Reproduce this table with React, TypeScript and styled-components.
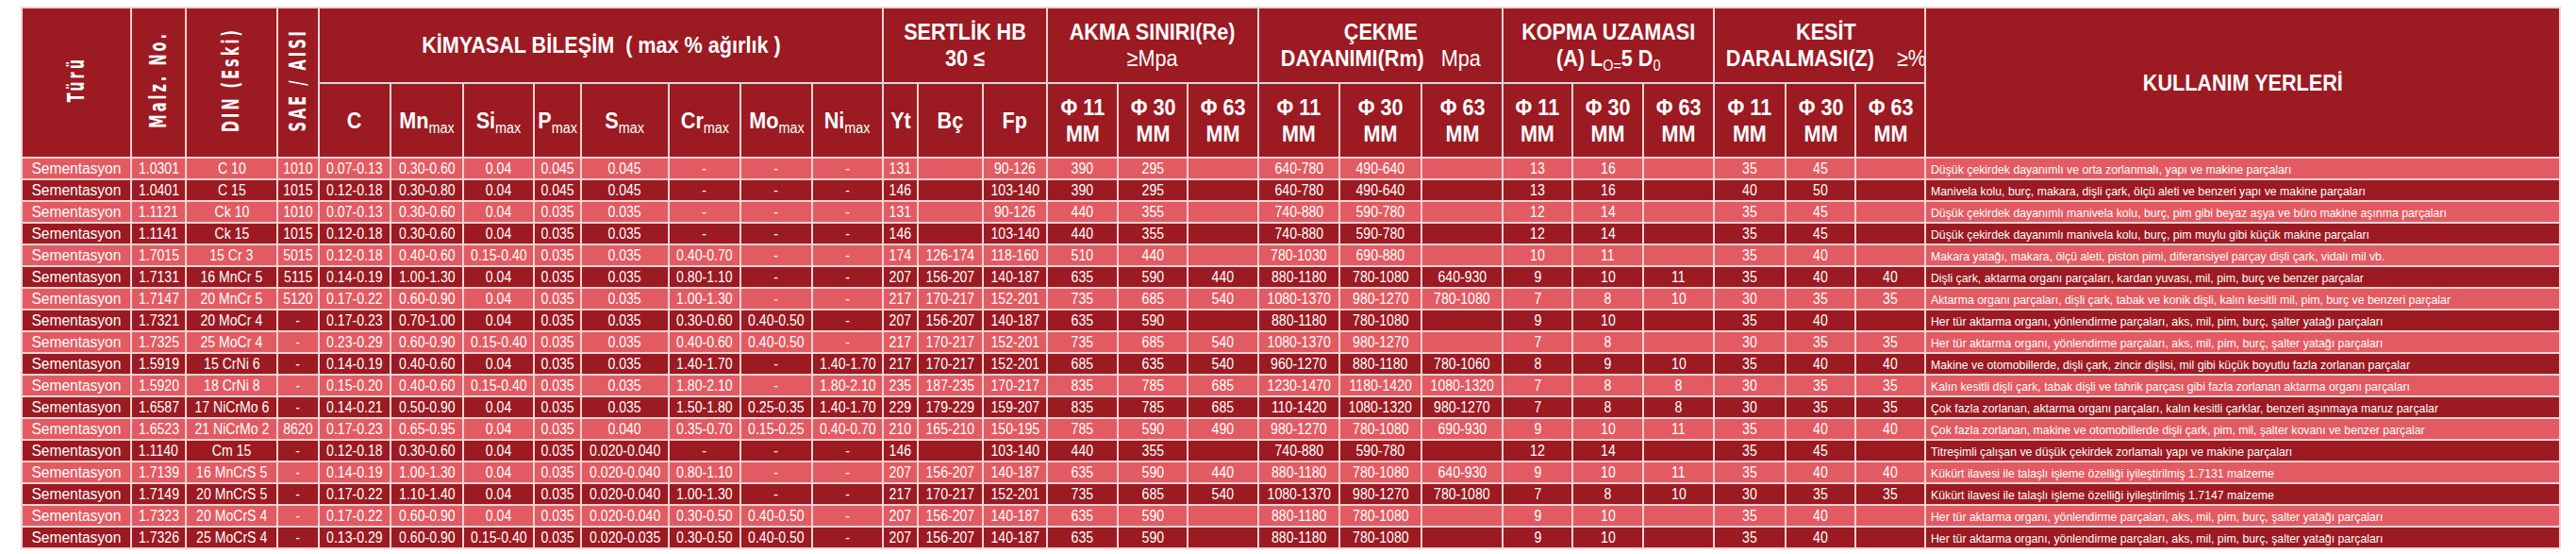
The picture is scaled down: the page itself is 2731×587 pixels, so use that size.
import styled, { createGlobalStyle } from "styled-components";
import type { ReactNode } from "react";

const GlobalStyle = createGlobalStyle`
  body {
    margin: 0;
    background: #ffffff;
    font-family: "Liberation Sans", Arial, sans-serif;
  }
`;

const Page = styled.div`
  padding: 7px 0 0 22px;
`;

const Table = styled.table`
  border-collapse: collapse;
  table-layout: fixed;
  width: 2691px;
  color: #ffffff;
`;

const HeadRow = styled.tr<{ $h: number }>`
  height: ${({ $h }) => $h}px;
`;

const HeadCell = styled.th<{ $group?: boolean }>`
  background: #9c1a22;
  color: #ffffff;
  font-size: 24px;
  font-weight: bold;
  line-height: 28px;
  padding: 0;
  text-align: center;
  vertical-align: middle;
  border: 2px solid #f1d4d5;
  border-bottom-color: ${({ $group }) => ($group ? "#d6d6d6" : "#f1d4d5")};
  white-space: nowrap;
  overflow: hidden;
`;

// narrow, tall look of the original sheet
const HeadText = styled.span`
  display: inline-block;
  transform: scaleX(0.9);
`;

const VerticalLabel = styled.span`
  display: inline-block;
  writing-mode: vertical-rl;
  transform: rotate(180deg) scaleX(1.75);
  font-family: "DejaVu Sans", Verdana, sans-serif;
  font-size: 14.5px;
  line-height: 15px;
  letter-spacing: 3px;
  font-weight: bold;
`;

const Sub = styled.sub`
  font-size: 16px;
  font-weight: normal;
  line-height: 0;
  vertical-align: -5px;
`;

const Light = styled.span`
  font-weight: normal;
`;

const Row = styled.tr<{ $dark: boolean }>`
  height: 23px;
  background: ${({ $dark }) => ($dark ? "#9c1a22" : "#e35b62")};
`;

const Cell = styled.td`
  border: 2px solid #f1d4d5;
  padding: 0;
  font-size: 16px;
  line-height: 19px;
  text-align: center;
  vertical-align: middle;
  white-space: nowrap;
  overflow: hidden;
`;

const Val = styled.span<{ $sx: number }>`
  display: inline-block;
  transform: scaleX(${({ $sx }) => $sx});
`;

const UsageCell = styled.td`
  border: 2px solid #f1d4d5;
  padding: 0 0 1px 5px;
  font-size: 13.5px;
  line-height: 16px;
  text-align: left;
  vertical-align: bottom;
  white-space: nowrap;
  overflow: hidden;
`;

const UsageText = styled.span`
  display: inline-block;
  transform: scaleX(0.91);
  transform-origin: left center;
`;

const widths = [
  116, 58, 97, 44, 76, 77, 75, 50, 93, 76, 76, 75, 37, 69, 68, 75, 74, 75, 86,
  87, 86, 74, 75, 75, 76, 74, 74, 673,
];

type Steel = {
  no: string;
  din: string;
  sae: string;
  chem: string[];
  hb: string[];
  akma: string[];
  cekme: string[];
  kopma: string[];
  kesit: string[];
  use: string;
};

const s = (
  no: string,
  din: string,
  sae: string,
  chem: string[],
  hb: string[],
  akma: string[],
  cekme: string[],
  kopma: string[],
  kesit: string[],
  use: string
): Steel => ({ no, din, sae, chem, hb, akma, cekme, kopma, kesit, use });

const HER_TUR =
  "Her tür aktarma organı, yönlendirme parçaları, aks, mil, pim, burç, şalter yatağı parçaları";

const steels: Steel[] = [
  s("1.0301", "C 10", "1010", ["0.07-0.13", "0.30-0.60", "0.04", "0.045", "0.045", "-", "-", "-"], ["131", "", "90-126"], ["390", "295", ""], ["640-780", "490-640", ""], ["13", "16", ""], ["35", "45", ""], "Düşük çekirdek dayanımlı ve orta zorlanmalı, yapı ve makine parçaları"),
  s("1.0401", "C 15", "1015", ["0.12-0.18", "0.30-0.80", "0.04", "0.045", "0.045", "-", "-", "-"], ["146", "", "103-140"], ["390", "295", ""], ["640-780", "490-640", ""], ["13", "16", ""], ["40", "50", ""], "Manivela kolu, burç, makara, dişli çark, ölçü aleti ve benzeri yapı ve makine parçaları"),
  s("1.1121", "Ck 10", "1010", ["0.07-0.13", "0.30-0.60", "0.04", "0.035", "0.035", "-", "-", "-"], ["131", "", "90-126"], ["440", "355", ""], ["740-880", "590-780", ""], ["12", "14", ""], ["35", "45", ""], "Düşük çekirdek dayanımlı manivela kolu, burç, pim gibi beyaz aşya ve büro makine aşınma parçaları"),
  s("1.1141", "Ck 15", "1015", ["0.12-0.18", "0.30-0.60", "0.04", "0.035", "0.035", "-", "-", "-"], ["146", "", "103-140"], ["440", "355", ""], ["740-880", "590-780", ""], ["12", "14", ""], ["35", "45", ""], "Düşük çekirdek dayanımlı manivela kolu, burç, pim muylu gibi küçük makine parçaları"),
  s("1.7015", "15 Cr 3", "5015", ["0.12-0.18", "0.40-0.60", "0.15-0.40", "0.035", "0.035", "0.40-0.70", "-", "-"], ["174", "126-174", "118-160"], ["510", "440", ""], ["780-1030", "690-880", ""], ["10", "11", ""], ["35", "40", ""], "Makara yatağı, makara, ölçü aleti, piston pimi, diferansiyel parçay dişli çark, vidalı mil vb."),
  s("1.7131", "16 MnCr 5", "5115", ["0.14-0.19", "1.00-1.30", "0.04", "0.035", "0.035", "0.80-1.10", "-", "-"], ["207", "156-207", "140-187"], ["635", "590", "440"], ["880-1180", "780-1080", "640-930"], ["9", "10", "11"], ["35", "40", "40"], "Dişli çark, aktarma organı parçaları, kardan yuvası, mil, pim, burç ve benzer parçalar"),
  s("1.7147", "20 MnCr 5", "5120", ["0.17-0.22", "0.60-0.90", "0.04", "0.035", "0.035", "1.00-1.30", "-", "-"], ["217", "170-217", "152-201"], ["735", "685", "540"], ["1080-1370", "980-1270", "780-1080"], ["7", "8", "10"], ["30", "35", "35"], "Aktarma organı parçaları, dişli çark, tabak ve konik dişli, kalın kesitli mil, pim, burç ve benzeri parçalar"),
  s("1.7321", "20 MoCr 4", "-", ["0.17-0.23", "0.70-1.00", "0.04", "0.035", "0.035", "0.30-0.60", "0.40-0.50", "-"], ["207", "156-207", "140-187"], ["635", "590", ""], ["880-1180", "780-1080", ""], ["9", "10", ""], ["35", "40", ""], HER_TUR),
  s("1.7325", "25 MoCr 4", "-", ["0.23-0.29", "0.60-0.90", "0.15-0.40", "0.035", "0.035", "0.40-0.60", "0.40-0.50", "-"], ["217", "170-217", "152-201"], ["735", "685", "540"], ["1080-1370", "980-1270", ""], ["7", "8", ""], ["30", "35", "35"], HER_TUR),
  s("1.5919", "15 CrNi 6", "-", ["0.14-0.19", "0.40-0.60", "0.04", "0.035", "0.035", "1.40-1.70", "-", "1.40-1.70"], ["217", "170-217", "152-201"], ["685", "635", "540"], ["960-1270", "880-1180", "780-1060"], ["8", "9", "10"], ["35", "40", "40"], "Makine ve otomobillerde, dişli çark, zincir dişlisi, mil gibi küçük boyutlu fazla zorlanan parçalar"),
  s("1.5920", "18 CrNi 8", "-", ["0.15-0.20", "0.40-0.60", "0.15-0.40", "0.035", "0.035", "1.80-2.10", "-", "1.80-2.10"], ["235", "187-235", "170-217"], ["835", "785", "685"], ["1230-1470", "1180-1420", "1080-1320"], ["7", "8", "8"], ["30", "35", "35"], "Kalın kesitli dişli çark, tabak dişli ve tahrik parçası gibi fazla zorlanan aktarma organı parçaları"),
  s("1.6587", "17 NiCrMo 6", "-", ["0.14-0.21", "0.50-0.90", "0.04", "0.035", "0.035", "1.50-1.80", "0.25-0.35", "1.40-1.70"], ["229", "179-229", "159-207"], ["835", "785", "685"], ["110-1420", "1080-1320", "980-1270"], ["7", "8", "8"], ["30", "35", "35"], "Çok fazla zorlanan, aktarma organı parçaları, kalın kesitli çarklar, benzeri aşınmaya maruz parçalar"),
  s("1.6523", "21 NiCrMo 2", "8620", ["0.17-0.23", "0.65-0.95", "0.04", "0.035", "0.040", "0.35-0.70", "0.15-0.25", "0.40-0.70"], ["210", "165-210", "150-195"], ["785", "590", "490"], ["980-1270", "780-1080", "690-930"], ["9", "10", "11"], ["35", "40", "40"], "Çok fazla zorlanan, makine ve otomobillerde dişli çark, pim, mil, şalter kovanı ve benzer parçalar"),
  s("1.1140", "Cm 15", "-", ["0.12-0.18", "0.30-0.60", "0.04", "0.035", "0.020-0.040", "-", "-", "-"], ["146", "", "103-140"], ["440", "355", ""], ["740-880", "590-780", ""], ["12", "14", ""], ["35", "45", ""], "Titreşimli çalışan ve düşük çekirdek zorlamalı yapı ve makine parçaları"),
  s("1.7139", "16 MnCrS 5", "-", ["0.14-0.19", "1.00-1.30", "0.04", "0.035", "0.020-0.040", "0.80-1.10", "-", "-"], ["207", "156-207", "140-187"], ["635", "590", "440"], ["880-1180", "780-1080", "640-930"], ["9", "10", "11"], ["35", "40", "40"], "Kükürt ilavesi ile talaşlı işleme özelliği iyileştirilmiş 1.7131 malzeme"),
  s("1.7149", "20 MnCrS 5", "-", ["0.17-0.22", "1.10-1.40", "0.04", "0.035", "0.020-0.040", "1.00-1.30", "-", "-"], ["217", "170-217", "152-201"], ["735", "685", "540"], ["1080-1370", "980-1270", "780-1080"], ["7", "8", "10"], ["30", "35", "35"], "Kükürt ilavesi ile talaşlı işleme özelliği iyileştirilmiş 1.7147 malzeme"),
  s("1.7323", "20 MoCrS 4", "-", ["0.17-0.22", "0.60-0.90", "0.04", "0.035", "0.020-0.040", "0.30-0.50", "0.40-0.50", "-"], ["207", "156-207", "140-187"], ["635", "590", ""], ["880-1180", "780-1080", ""], ["9", "10", ""], ["35", "40", ""], HER_TUR),
  s("1.7326", "25 MoCrS 4", "-", ["0.13-0.29", "0.60-0.90", "0.15-0.40", "0.035", "0.020-0.035", "0.30-0.50", "0.40-0.50", "-"], ["207", "156-207", "140-187"], ["635", "590", ""], ["880-1180", "780-1080", ""], ["9", "10", ""], ["35", "40", ""], HER_TUR),
];

const elements = ["Mn", "Si", "P", "S", "Cr", "Mo", "Ni"];
const diameters = ["11", "30", "63"];

function Head({ children, span, group }: { children: ReactNode; span?: number; group?: boolean }) {
  return (
    <HeadCell colSpan={span} $group={group}>
      <HeadText>{children}</HeadText>
    </HeadCell>
  );
}

function DiaHeads() {
  return (
    <>
      {diameters.map((d) => (
        <Head key={d}>
          Φ {d}
          <br />
          MM
        </Head>
      ))}
    </>
  );
}

function Vertical({ children }: { children: string }) {
  return (
    <HeadCell rowSpan={2}>
      <VerticalLabel>{children}</VerticalLabel>
    </HeadCell>
  );
}

export default function App() {
  return (
    <Page>
      <GlobalStyle />
      <Table>
        <colgroup>
          {widths.map((w, i) => (
            <col key={i} style={{ width: w }} />
          ))}
        </colgroup>
        <thead>
          <HeadRow $h={80}>
            <Vertical>Türü</Vertical>
            <Vertical>Malz. No.</Vertical>
            <Vertical>DIN (Eski)</Vertical>
            <Vertical>SAE / AISI</Vertical>
            <Head span={8} group>
              KİMYASAL BİLEŞİM&nbsp; ( max % ağırlık )
            </Head>
            <Head span={3} group>
              SERTLİK HB
              <br />
              30 ≤
            </Head>
            <Head span={3} group>
              AKMA SINIRI(Re)
              <br />
              <Light>≥Mpa</Light>
            </Head>
            <Head span={3} group>
              ÇEKME
              <br />
              DAYANIMI(Rm)&nbsp;&nbsp; <Light>Mpa</Light>
            </Head>
            <Head span={3} group>
              KOPMA UZAMASI
              <br />
              (A) L<Sub>O=</Sub>5 D<Sub>0</Sub>
            </Head>
            <Head span={3} group>
              KESİT
              <br />
              DARALMASI(Z)&nbsp;&nbsp;&nbsp; <Light>≥%</Light>
            </Head>
            <HeadCell rowSpan={2}>
              <HeadText>KULLANIM YERLERİ</HeadText>
            </HeadCell>
          </HeadRow>
          <HeadRow $h={79}>
            <Head>C</Head>
            {elements.map((el) => (
              <Head key={el}>
                {el}
                <Sub>max</Sub>
              </Head>
            ))}
            <Head>Yt</Head>
            <Head>Bç</Head>
            <Head>Fp</Head>
            <DiaHeads />
            <DiaHeads />
            <DiaHeads />
            <DiaHeads />
          </HeadRow>
        </thead>
        <tbody>
          {steels.map((st, i) => (
            <Row key={st.no} $dark={i % 2 === 1}>
              <Cell>
                <Val $sx={0.97}>Sementasyon</Val>
              </Cell>
              {[
                st.no,
                st.din,
                st.sae,
                ...st.chem,
                ...st.hb,
                ...st.akma,
                ...st.cekme,
                ...st.kopma,
                ...st.kesit,
              ].map((v, j) => (
                <Cell key={j}>
                  <Val $sx={0.88}>{v}</Val>
                </Cell>
              ))}
              <UsageCell>
                <UsageText>{st.use}</UsageText>
              </UsageCell>
            </Row>
          ))}
        </tbody>
      </Table>
    </Page>
  );
}
